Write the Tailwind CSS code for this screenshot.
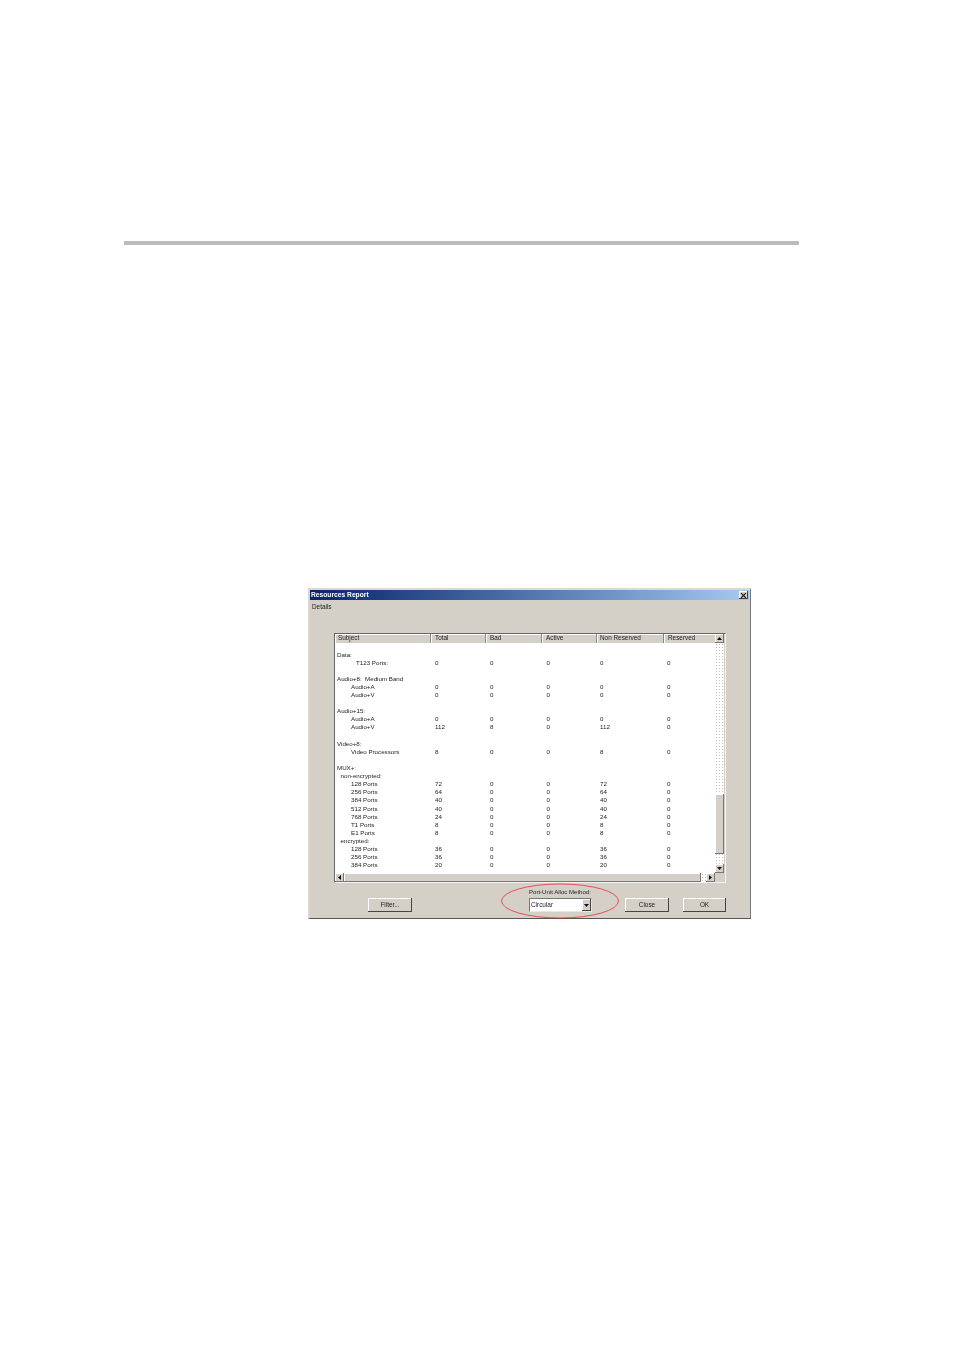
<!doctype html>
<html><head><meta charset="utf-8"><title>Resources Report</title>
<script src="https://cdn.jsdelivr.net/npm/@tailwindcss/browser@4"></script></head>
<body class="bg-white font-['Liberation_Sans',Arial,sans-serif]">
<div class="h-[1351px] w-[954px] overflow-hidden flex flex-col">
<div class="mt-[241px] ml-[124px] w-[675px] h-[4px] bg-[#bcbcbc]"></div>
<section class="mt-[343px] ml-[308px] w-[443px] h-[331px] bg-[#d4d0c8] border-t-[2px] border-l-[2px] border-r border-b border-t-[#dcd9d2] border-l-[#d8d5ce] border-r-[#777] border-b-[#555] flex flex-col text-[6.4px] text-[#222] relative blur-[0.3px]">
  <div class="h-[10px] mr-px bg-linear-to-r from-[#0a246a] to-[#a6caf0] flex items-center justify-between pl-[1px] pr-px text-white font-bold text-[6.7px] leading-[10px]">
    <span>Resources Report</span>
    <span class="w-[9px] h-[8px] bg-[#d4d0c8] shadow-[inset_-1px_-1px_0_#404040,inset_1px_1px_0_#fff] flex items-center justify-center">
      <svg width="5" height="5" viewBox="0 0 5 5"><path d="M0 0L5 5M5 0L0 5" stroke="#111" stroke-width="1.1"/></svg>
    </span>
  </div>
  <div class="pl-[2px] mt-[2px] h-[9px] leading-[9px]">Details</div>

  <div class="ml-[24px] mt-[22px] w-[392px] h-[250px] border-t border-l border-r border-b border-t-[#666] border-l-[#666] border-r-[#f4f2ee] border-b-[#f4f2ee] bg-white flex flex-col">
    <div class="flex flex-1 min-h-0">
      <div class="w-[380px] flex flex-col">
        <div class="h-[9px] leading-[8px] bg-[#d4d0c8] grid grid-cols-[96px_55px_56px_55px_67px_51px]">
          <div class="pl-[3px] border-r border-r-[#888] shadow-[inset_1px_1px_0_#fff]">Subject</div>
          <div class="pl-[4px] border-r border-r-[#888] shadow-[inset_1px_1px_0_#fff]">Total</div>
          <div class="pl-[4px] border-r border-r-[#888] shadow-[inset_1px_1px_0_#fff]">Bad</div>
          <div class="pl-[4px] border-r border-r-[#888] shadow-[inset_1px_1px_0_#fff]">Active</div>
          <div class="pl-[3px] border-r border-r-[#888] shadow-[inset_1px_1px_0_#fff]">Non Reserved</div>
          <div class="pl-[4px] shadow-[inset_1px_1px_0_#fff]">Reserved</div>
        </div>
        <div class="pt-[7.5px] pl-[2px] text-[6.2px] [&>div]:h-[8.115px] [&>div]:leading-[8.115px] [&>div]:grid [&>div]:grid-cols-[98px_55px_56.5px_53.5px_67px_1fr]">
          <div><span class="whitespace-nowrap">Data:</span></div>
          <div><span class="pl-[19px]">T123 Ports:</span><span>0</span><span>0</span><span>0</span><span>0</span><span>0</span></div>
          <div></div>
          <div><span class="whitespace-nowrap">Audio+8:&nbsp; Medium Band</span></div>
          <div><span class="pl-[14px]">Audio+A</span><span>0</span><span>0</span><span>0</span><span>0</span><span>0</span></div>
          <div><span class="pl-[14px]">Audio+V</span><span>0</span><span>0</span><span>0</span><span>0</span><span>0</span></div>
          <div></div>
          <div><span>Audio+15:</span></div>
          <div><span class="pl-[14px]">Audio+A</span><span>0</span><span>0</span><span>0</span><span>0</span><span>0</span></div>
          <div><span class="pl-[14px]">Audio+V</span><span>112</span><span>8</span><span>0</span><span>112</span><span>0</span></div>
          <div></div>
          <div><span>Video+8:</span></div>
          <div><span class="pl-[14px]">Video Processors</span><span>8</span><span>0</span><span>0</span><span>8</span><span>0</span></div>
          <div></div>
          <div><span>MUX+:</span></div>
          <div><span class="pl-[3.5px]">non-encrypted:</span></div>
          <div><span class="pl-[14px]">128 Ports</span><span>72</span><span>0</span><span>0</span><span>72</span><span>0</span></div>
          <div><span class="pl-[14px]">256 Ports</span><span>64</span><span>0</span><span>0</span><span>64</span><span>0</span></div>
          <div><span class="pl-[14px]">384 Ports</span><span>40</span><span>0</span><span>0</span><span>40</span><span>0</span></div>
          <div><span class="pl-[14px]">512 Ports</span><span>40</span><span>0</span><span>0</span><span>40</span><span>0</span></div>
          <div><span class="pl-[14px]">768 Ports</span><span>24</span><span>0</span><span>0</span><span>24</span><span>0</span></div>
          <div><span class="pl-[14px]">T1 Ports</span><span>8</span><span>0</span><span>0</span><span>8</span><span>0</span></div>
          <div><span class="pl-[14px]">E1 Ports</span><span>8</span><span>0</span><span>0</span><span>8</span><span>0</span></div>
          <div><span class="pl-[3.5px]">encrypted:</span></div>
          <div><span class="pl-[14px]">128 Ports</span><span>36</span><span>0</span><span>0</span><span>36</span><span>0</span></div>
          <div><span class="pl-[14px]">256 Ports</span><span>36</span><span>0</span><span>0</span><span>36</span><span>0</span></div>
          <div><span class="pl-[14px]">384 Ports</span><span>20</span><span>0</span><span>0</span><span>20</span><span>0</span></div>
        </div>
      </div>
      <div class="w-[9px] flex flex-col bg-white bg-[image:radial-gradient(#c4c0b8_0.7px,transparent_0.9px)] bg-[length:3px_3px]">
        <div class="h-[9px] bg-[#d4d0c8] shadow-[inset_-1px_-1px_0_#777,inset_1px_1px_0_#fff] flex items-center justify-center">
          <svg width="5" height="3" viewBox="0 0 5 3"><path d="M2.5 0L5 3H0Z" fill="#111"/></svg>
        </div>
        <div class="h-[151px]"></div>
        <div class="h-[60px] bg-[#d4d0c8] shadow-[inset_-1px_-1px_0_#777,inset_1px_1px_0_#fff]"></div>
        <div class="flex-1"></div>
        <div class="h-[9px] bg-[#d4d0c8] shadow-[inset_-1px_-1px_0_#777,inset_1px_1px_0_#fff] flex items-center justify-center">
          <svg width="5" height="3" viewBox="0 0 5 3"><path d="M0 0H5L2.5 3Z" fill="#111"/></svg>
        </div>
      </div>
      <div class="w-px bg-[#d4d0c8]"></div>
    </div>
    <div class="h-[9px] flex bg-[#d4d0c8] shrink-0">
      <div class="w-[9px] shadow-[inset_-1px_-1px_0_#777,inset_1px_1px_0_#fff] flex items-center justify-center">
        <svg width="3" height="5" viewBox="0 0 3 5"><path d="M3 0V5L0 2.5Z" fill="#111"/></svg>
      </div>
      <div class="w-[357px] shadow-[inset_-1px_-1px_0_#777,inset_1px_1px_0_#fff]"></div>
      <div class="w-[5px] bg-white bg-[image:radial-gradient(#c4c0b8_0.7px,transparent_0.9px)] bg-[length:3px_3px]"></div>
      <div class="w-[9px] shadow-[inset_-1px_-1px_0_#777,inset_1px_1px_0_#fff] flex items-center justify-center">
        <svg width="3" height="5" viewBox="0 0 3 5"><path d="M0 0V5L3 2.5Z" fill="#111"/></svg>
      </div>
    </div>
  </div>

  <div class="flex-1 relative flex items-end pb-[6px] pl-[58px]">
    <svg class="absolute left-[190px] top-0 overflow-visible" width="120" height="36" viewBox="0 0 120 36"><ellipse cx="60" cy="18" rx="58.5" ry="17" fill="none" stroke="#ee2b35" stroke-width="0.8"/></svg>
    <button class="w-[44px] h-[14px] bg-[#d4d0c8] shadow-[inset_-1px_-1px_0_#444,inset_1px_1px_0_#fff] leading-[14px] text-center">Filter...</button>
    <div class="ml-[117px] w-[63px] relative">
      <div class="h-[12px] leading-[12px] whitespace-nowrap text-[6.05px]">Port-Unit Alloc Method:</div>
      <div class="h-[14px] flex items-center bg-white border-t border-l border-r border-b border-t-[#777] border-l-[#777] border-r-[#e8e6df] border-b-[#e8e6df]">
        <span class="flex-1 pl-[1px] leading-[12px]">Circular</span>
        <span class="w-[9px] h-[12px] bg-[#d4d0c8] shadow-[inset_-1px_-1px_0_#444,inset_1px_1px_0_#fff] flex items-center justify-center">
          <svg width="5" height="3" viewBox="0 0 5 3"><path d="M0 0H5L2.5 3Z" fill="#111"/></svg>
        </span>
      </div>
    </div>
    <button class="ml-[33px] w-[44px] h-[14px] bg-[#d4d0c8] shadow-[inset_-1px_-1px_0_#444,inset_1px_1px_0_#fff] leading-[14px] text-center">Close</button>
    <button class="ml-[14px] w-[43px] h-[14px] bg-[#d4d0c8] shadow-[inset_-1px_-1px_0_#444,inset_1px_1px_0_#fff] leading-[14px] text-center">OK</button>
  </div>
</section>
</div>
</body></html>
